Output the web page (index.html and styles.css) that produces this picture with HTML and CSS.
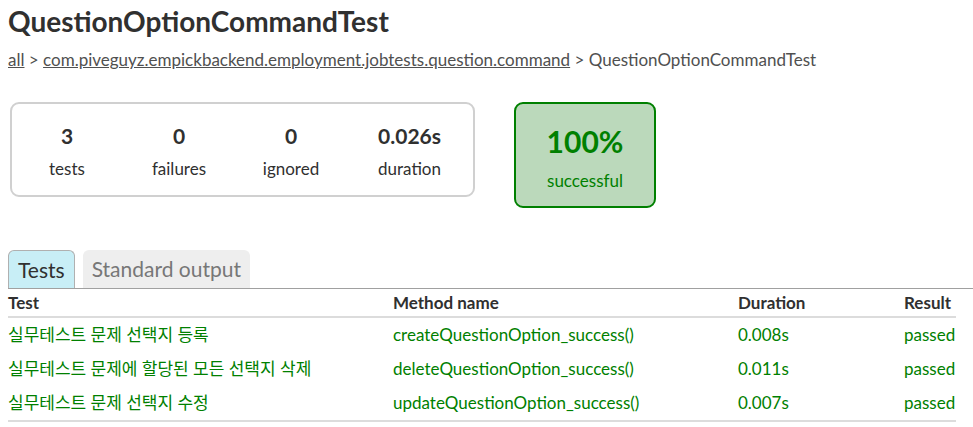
FILE: index.html
```html
<!DOCTYPE html>
<html lang="ko">
<head>
<meta charset="utf-8">
<title>Test results - QuestionOptionCommandTest</title>
<link rel="stylesheet" href="styles.css">
</head>
<body>
<div class="content">
  <h1>QuestionOptionCommandTest</h1>
  <div class="breadcrumbs">
    <a href="#">all</a> &gt; <a href="#">com.piveguyz.empickbackend.employment.jobtests.question.command</a> &gt; QuestionOptionCommandTest
  </div>
  <div class="summary">
    <div class="summary-box">
      <div class="counter c1"><div class="value">3</div><div class="label">tests</div></div>
      <div class="counter c2"><div class="value">0</div><div class="label">failures</div></div>
      <div class="counter c3"><div class="value">0</div><div class="label">ignored</div></div>
      <div class="counter c4"><div class="value">0.026s</div><div class="label">duration</div></div>
    </div>
    <div class="success-rate">
      <div class="percent">100%</div>
      <div class="label">successful</div>
    </div>
  </div>
  <ul class="tab-links">
    <li class="tab selected">Tests</li>
    <li class="tab">Standard output</li>
  </ul>
  <table class="results">
    <thead>
      <tr><th class="col-test">Test</th><th class="col-method">Method name</th><th class="col-dur">Duration</th><th class="col-res">Result</th></tr>
    </thead>
    <tbody>
      <tr><td>실무테스트 문제 선택지 등록</td><td>createQuestionOption_success()</td><td>0.008s</td><td>passed</td></tr>
      <tr><td>실무테스트 문제에 할당된 모든 선택지 삭제</td><td>deleteQuestionOption_success()</td><td>0.011s</td><td>passed</td></tr>
      <tr><td>실무테스트 문제 선택지 수정</td><td>updateQuestionOption_success()</td><td>0.007s</td><td>passed</td></tr>
    </tbody>
  </table>
</div>
</body>
</html>
```
FILE: styles.css
```css
html, body {
  margin: 0;
  padding: 0;
  background: #fff;
}
body {
  font-family: Lato, "Noto Sans CJK KR", sans-serif;
  font-size: 17px;
  color: #303030;
}
.content {
  padding: 0 0 0 8px;
}
h1 {
  margin: 0;
  padding-top: 4px;
  font-size: 28px;
  font-weight: bold;
  line-height: 34px;
  color: #303030;
}
.breadcrumbs {
  margin-top: 10px;
  line-height: 24px;
  color: #505050;
}
.breadcrumbs a {
  color: #505050;
  text-decoration: underline;
}
.summary {
  display: flex;
  align-items: flex-start;
  margin-top: 30px;
  padding-left: 2px;
}
.summary-box {
  display: flex;
  width: 461px;
  height: 91px;
  box-sizing: content-box;
  border: 2px solid #d0d0d0;
  border-radius: 9px;
}
.counter {
  text-align: center;
  padding-top: 19px;
}
.c1 { width: 110px; }
.c2 { width: 114px; }
.c3 { width: 110px; }
.c4 { width: 127px; }
.counter .value {
  font-weight: bold;
  font-size: 21px;
  line-height: 26px;
}
.counter .label {
  margin-top: 8px;
  line-height: 24px;
}
.success-rate {
  margin-left: 39px;
  width: 138px;
  height: 102px;
  background: #bbd9bb;
  border: 2px solid #008000;
  border-radius: 9px;
  color: #008000;
  text-align: center;
}
.success-rate .percent {
  margin-top: 19px;
  font-size: 30px;
  font-weight: bold;
  line-height: 36px;
}
.success-rate .label {
  margin-top: 10px;
  line-height: 24px;
}
.tab-links {
  list-style: none;
  margin: 42px 0 0 0;
  padding: 0;
  display: flex;
  gap: 8px;
  border-bottom: 1px solid #a0a0a0;
}
.tab {
  height: 38px;
  line-height: 38px;
  padding: 0 9px;
  font-size: 21px;
  border-radius: 6px 6px 0 0;
  background: #eeeeee;
  color: #777777;
}
.tab.selected {
  background: #c8eef6;
  color: #303030;
  border: 1px solid #b0b0b0;
  border-bottom: none;
  height: 37px;
  line-height: 37px;
}
.results {
  border-collapse: collapse;
  width: 948px;
}
.results th {
  text-align: left;
  font-weight: bold;
  padding: 4px 0 3px 0;
  line-height: 20px;
  border-bottom: 2px solid #dcdcdc;
}
.results td {
  padding: 0;
  height: 34px;
  line-height: 20px;
  color: #008000;
}
.results tbody tr:last-child td {
  border-bottom: 2px solid #dcdcdc;
}
.col-test { width: 385px; }
.col-method { width: 345px; }
.col-dur { width: 166px; }
```
